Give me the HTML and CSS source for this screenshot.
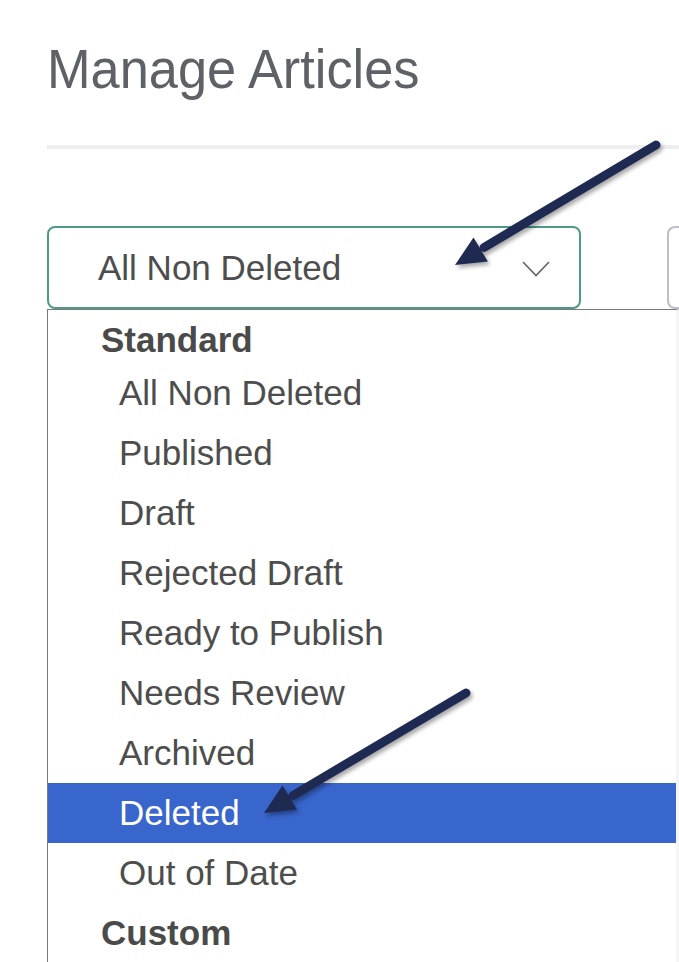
FILE: index.html
```html
<!DOCTYPE html>
<html lang="en">
<head>
<meta charset="utf-8">
<title>Manage Articles</title>
<link rel="stylesheet" href="styles.css">
</head>
<body>
<div class="page">
  <h1 class="title"><span class="title-text">Manage Articles</span></h1>
  <hr class="divider">
  <div class="filters">
    <div class="select-wrap">
      <div class="select">
        <span class="select-value">All Non Deleted</span>
        <svg class="chevron" width="28" height="16" viewBox="0 0 28 16" aria-hidden="true">
          <polyline points="1,1 14,14.5 27,1" fill="none" stroke="#666666" stroke-width="1.7"/>
        </svg>
      </div>
      <div class="menu">
        <div class="menu-list">
          <div class="group group-first">Standard</div>
          <div class="option">All Non Deleted</div>
          <div class="option">Published</div>
          <div class="option">Draft</div>
          <div class="option">Rejected Draft</div>
          <div class="option">Ready to Publish</div>
          <div class="option">Needs Review</div>
          <div class="option">Archived</div>
          <div class="option option-active">Deleted</div>
          <div class="option">Out of Date</div>
          <div class="group">Custom</div>
        </div>
      </div>
    </div>
    <div class="search-box"></div>
  </div>
</div>
<svg class="annotations" width="679" height="962" viewBox="0 0 679 962" aria-hidden="true">
  <g class="arrow">
    <line x1="656" y1="145" x2="484" y2="247.5" stroke="#1f2a52" stroke-width="9" stroke-linecap="round"/>
    <polygon points="455,265 473.5,237.5 487.9,261.5" fill="#1f2a52"/>
  </g>
  <g class="arrow">
    <line x1="466" y1="693" x2="293" y2="795.5" stroke="#1f2a52" stroke-width="9" stroke-linecap="round"/>
    <polygon points="264,813 282.5,785.6 296.9,809.6" fill="#1f2a52"/>
  </g>
</svg>
</body>
</html>
```

FILE: styles.css
```css
html, body {
  margin: 0;
  padding: 0;
  background: #ffffff;
  overflow: hidden;
}

body {
  width: 679px;
  height: 962px;
  position: relative;
  font-family: "Liberation Sans", Arial, sans-serif;
}

.page {
  padding: 41px 0 0 47px;
}

.title {
  margin: 0;
  font-weight: normal;
  font-size: 56px;
  line-height: 56px;
  height: 56px;
  color: #5e6166;
  white-space: nowrap;
}

.title-text {
  display: inline-block;
  transform: scaleX(0.935);
  transform-origin: left center;
}

.divider {
  margin: 48px 0 0 0;
  border: none;
  height: 4px;
  background: #eeeeee;
}

.filters {
  margin-top: 77px;
  display: flex;
  gap: 86px;
  align-items: flex-start;
}

.select-wrap {
  position: relative;
  width: 534px;
  flex: none;
}

.select {
  box-sizing: border-box;
  height: 83px;
  border: 2px solid #4e9a8a;
  border-radius: 8px;
  display: flex;
  align-items: center;
  justify-content: space-between;
  padding: 0 29px 0 49px;
}

.select-value {
  font-size: 35px;
  color: #4d4d4d;
  line-height: 39px;
}

.chevron {
  display: block;
  margin-top: 3px;
}

.search-box {
  box-sizing: border-box;
  width: 12px;
  height: 83px;
  flex: none;
  border: 2px solid #bfbccc;
  border-right: none;
  border-radius: 8px 0 0 8px;
}

.menu {
  position: absolute;
  top: 83px;
  left: 0;
  box-sizing: border-box;
  width: 632px;
  height: 700px;
  background: #ffffff;
  border-top: 1px solid #7a7a7a;
  border-left: 1px solid #7a7a7a;
  border-right: 3px solid #f5f5f5;
  z-index: 2;
}

.menu-list {
  display: flex;
  flex-direction: column;
}

.group {
  font-size: 35px;
  font-weight: bold;
  color: #4a4a4a;
  height: 60px;
  line-height: 60px;
  padding-left: 53px;
}

.group-first {
  height: 53px;
}

.option {
  font-size: 35px;
  color: #4d4d4d;
  height: 60px;
  line-height: 60px;
  padding-left: 71px;
  white-space: nowrap;
}

.option-active {
  background: #3966cc;
  color: #ffffff;
}

.annotations {
  position: absolute;
  top: 0;
  left: 0;
  z-index: 5;
  pointer-events: none;
}

.arrow {
  filter: drop-shadow(2px 3px 2px rgba(0, 0, 0, 0.35));
}
```
